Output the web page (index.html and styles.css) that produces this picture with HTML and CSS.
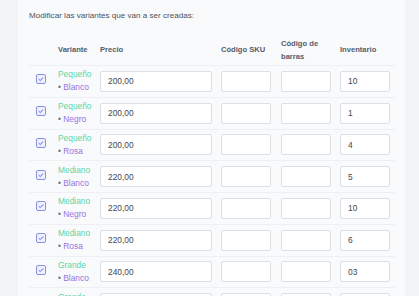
FILE: index.html
```html
<!DOCTYPE html>
<html lang="es">
<head>
<meta charset="utf-8">
<link rel="stylesheet" href="styles.css">
</head>
<body>
<div class="card">
  <p class="title">Modificar las variantes que van a ser creadas:</p>
  <div class="table">
    <div class="row head">
      <div></div>
      <div>Variante</div>
      <div>Precio</div>
      <div>Código SKU</div>
      <div>Código de<br>barras</div>
      <div>Inventario</div>
    </div>

    <div class="row">
      <div class="cb-cell"><svg class="cb" width="10" height="10" viewBox="0 0 10 10"><rect x="0.5" y="0.5" width="9" height="9" rx="1.5" fill="#eef0fd" stroke="#8a92e6"/><path d="M2.8 5.2 L4.3 6.6 L7.2 3.4" fill="none" stroke="#5b6ee0" stroke-width="1"/></svg></div>
      <div class="variant"><span class="size">Pequeño</span><span class="color"><i>•</i> Blanco</span></div>
      <div><input class="inp price" value="200,00"></div>
      <div><input class="inp small"></div>
      <div><input class="inp small"></div>
      <div><input class="inp small" value="10"></div>
    </div>

    <div class="row">
      <div class="cb-cell"><svg class="cb" width="10" height="10" viewBox="0 0 10 10"><rect x="0.5" y="0.5" width="9" height="9" rx="1.5" fill="#eef0fd" stroke="#8a92e6"/><path d="M2.8 5.2 L4.3 6.6 L7.2 3.4" fill="none" stroke="#5b6ee0" stroke-width="1"/></svg></div>
      <div class="variant"><span class="size">Pequeño</span><span class="color"><i>•</i> Negro</span></div>
      <div><input class="inp price" value="200,00"></div>
      <div><input class="inp small"></div>
      <div><input class="inp small"></div>
      <div><input class="inp small" value="1"></div>
    </div>

    <div class="row">
      <div class="cb-cell"><svg class="cb" width="10" height="10" viewBox="0 0 10 10"><rect x="0.5" y="0.5" width="9" height="9" rx="1.5" fill="#eef0fd" stroke="#8a92e6"/><path d="M2.8 5.2 L4.3 6.6 L7.2 3.4" fill="none" stroke="#5b6ee0" stroke-width="1"/></svg></div>
      <div class="variant"><span class="size">Pequeño</span><span class="color"><i>•</i> Rosa</span></div>
      <div><input class="inp price" value="200,00"></div>
      <div><input class="inp small"></div>
      <div><input class="inp small"></div>
      <div><input class="inp small" value="4"></div>
    </div>

    <div class="row">
      <div class="cb-cell"><svg class="cb" width="10" height="10" viewBox="0 0 10 10"><rect x="0.5" y="0.5" width="9" height="9" rx="1.5" fill="#eef0fd" stroke="#8a92e6"/><path d="M2.8 5.2 L4.3 6.6 L7.2 3.4" fill="none" stroke="#5b6ee0" stroke-width="1"/></svg></div>
      <div class="variant"><span class="size">Mediano</span><span class="color"><i>•</i> Blanco</span></div>
      <div><input class="inp price" value="220,00"></div>
      <div><input class="inp small"></div>
      <div><input class="inp small"></div>
      <div><input class="inp small" value="5"></div>
    </div>

    <div class="row">
      <div class="cb-cell"><svg class="cb" width="10" height="10" viewBox="0 0 10 10"><rect x="0.5" y="0.5" width="9" height="9" rx="1.5" fill="#eef0fd" stroke="#8a92e6"/><path d="M2.8 5.2 L4.3 6.6 L7.2 3.4" fill="none" stroke="#5b6ee0" stroke-width="1"/></svg></div>
      <div class="variant"><span class="size">Mediano</span><span class="color"><i>•</i> Negro</span></div>
      <div><input class="inp price" value="220,00"></div>
      <div><input class="inp small"></div>
      <div><input class="inp small"></div>
      <div><input class="inp small" value="10"></div>
    </div>

    <div class="row">
      <div class="cb-cell"><svg class="cb" width="10" height="10" viewBox="0 0 10 10"><rect x="0.5" y="0.5" width="9" height="9" rx="1.5" fill="#eef0fd" stroke="#8a92e6"/><path d="M2.8 5.2 L4.3 6.6 L7.2 3.4" fill="none" stroke="#5b6ee0" stroke-width="1"/></svg></div>
      <div class="variant"><span class="size">Mediano</span><span class="color"><i>•</i> Rosa</span></div>
      <div><input class="inp price" value="220,00"></div>
      <div><input class="inp small"></div>
      <div><input class="inp small"></div>
      <div><input class="inp small" value="6"></div>
    </div>

    <div class="row">
      <div class="cb-cell"><svg class="cb" width="10" height="10" viewBox="0 0 10 10"><rect x="0.5" y="0.5" width="9" height="9" rx="1.5" fill="#eef0fd" stroke="#8a92e6"/><path d="M2.8 5.2 L4.3 6.6 L7.2 3.4" fill="none" stroke="#5b6ee0" stroke-width="1"/></svg></div>
      <div class="variant"><span class="size">Grande</span><span class="color"><i>•</i> Blanco</span></div>
      <div><input class="inp price" value="240,00"></div>
      <div><input class="inp small"></div>
      <div><input class="inp small"></div>
      <div><input class="inp small" value="03"></div>
    </div>

    <div class="row">
      <div class="cb-cell"><svg class="cb" width="10" height="10" viewBox="0 0 10 10"><rect x="0.5" y="0.5" width="9" height="9" rx="1.5" fill="#eef0fd" stroke="#8a92e6"/><path d="M2.8 5.2 L4.3 6.6 L7.2 3.4" fill="none" stroke="#5b6ee0" stroke-width="1"/></svg></div>
      <div class="variant"><span class="size">Grande</span><span class="color"><i>•</i> Negro</span></div>
      <div><input class="inp price" value="240,00"></div>
      <div><input class="inp small"></div>
      <div><input class="inp small"></div>
      <div><input class="inp small" value="2"></div>
    </div>
  </div>
</div>
</body>
</html>
```

FILE: styles.css
```css
html, body {
  margin: 0;
  padding: 0;
  background: #f1f3f5;
  font-family: "Liberation Sans", Arial, sans-serif;
}

.card {
  margin-left: 18px;
  width: 366px;
  padding: 0 10px 0 11px;
  background: #f9fafb;
  min-height: 400px;
}

.title {
  margin: 0;
  padding-top: 10px;
  font-size: 8.1px;
  line-height: 12px;
  color: #4a5260;
}

.table {
  margin-top: 12px;
}

.row {
  display: grid;
  grid-template-columns: 29px 42px 121px 60px 59px 55px;
  align-items: center;
  height: 30.75px;
  border-bottom: 1px solid #edeff2;
}

.row.head {
  height: 31px;
  font-size: 7.6px;
  font-weight: 700;
  line-height: 13px;
  color: #555d6a;
}

.cb-cell {
  padding-left: 7px;
  height: 10px;
  margin-bottom: 4px;
}

.cb {
  display: block;
}

.variant {
  display: flex;
  flex-direction: column;
  font-size: 8.4px;
  line-height: 13px;
}

.size {
  color: #5fd3a6;
}

.color {
  color: #9a72dc;
}

.color i {
  font-style: normal;
  color: #6b7280;
}

.inp {
  display: block;
  box-sizing: border-box;
  height: 21px;
  margin: 0;
  padding: 0 0 0 7px;
  border: 1px solid #dcdfe3;
  border-radius: 2px;
  background: #fff;
  font-family: "Liberation Sans", Arial, sans-serif;
  font-size: 8.4px;
  color: #3f4652;
  outline: none;
}

.inp.price {
  width: 112px;
}

.inp.small {
  width: 50px;
}
```
